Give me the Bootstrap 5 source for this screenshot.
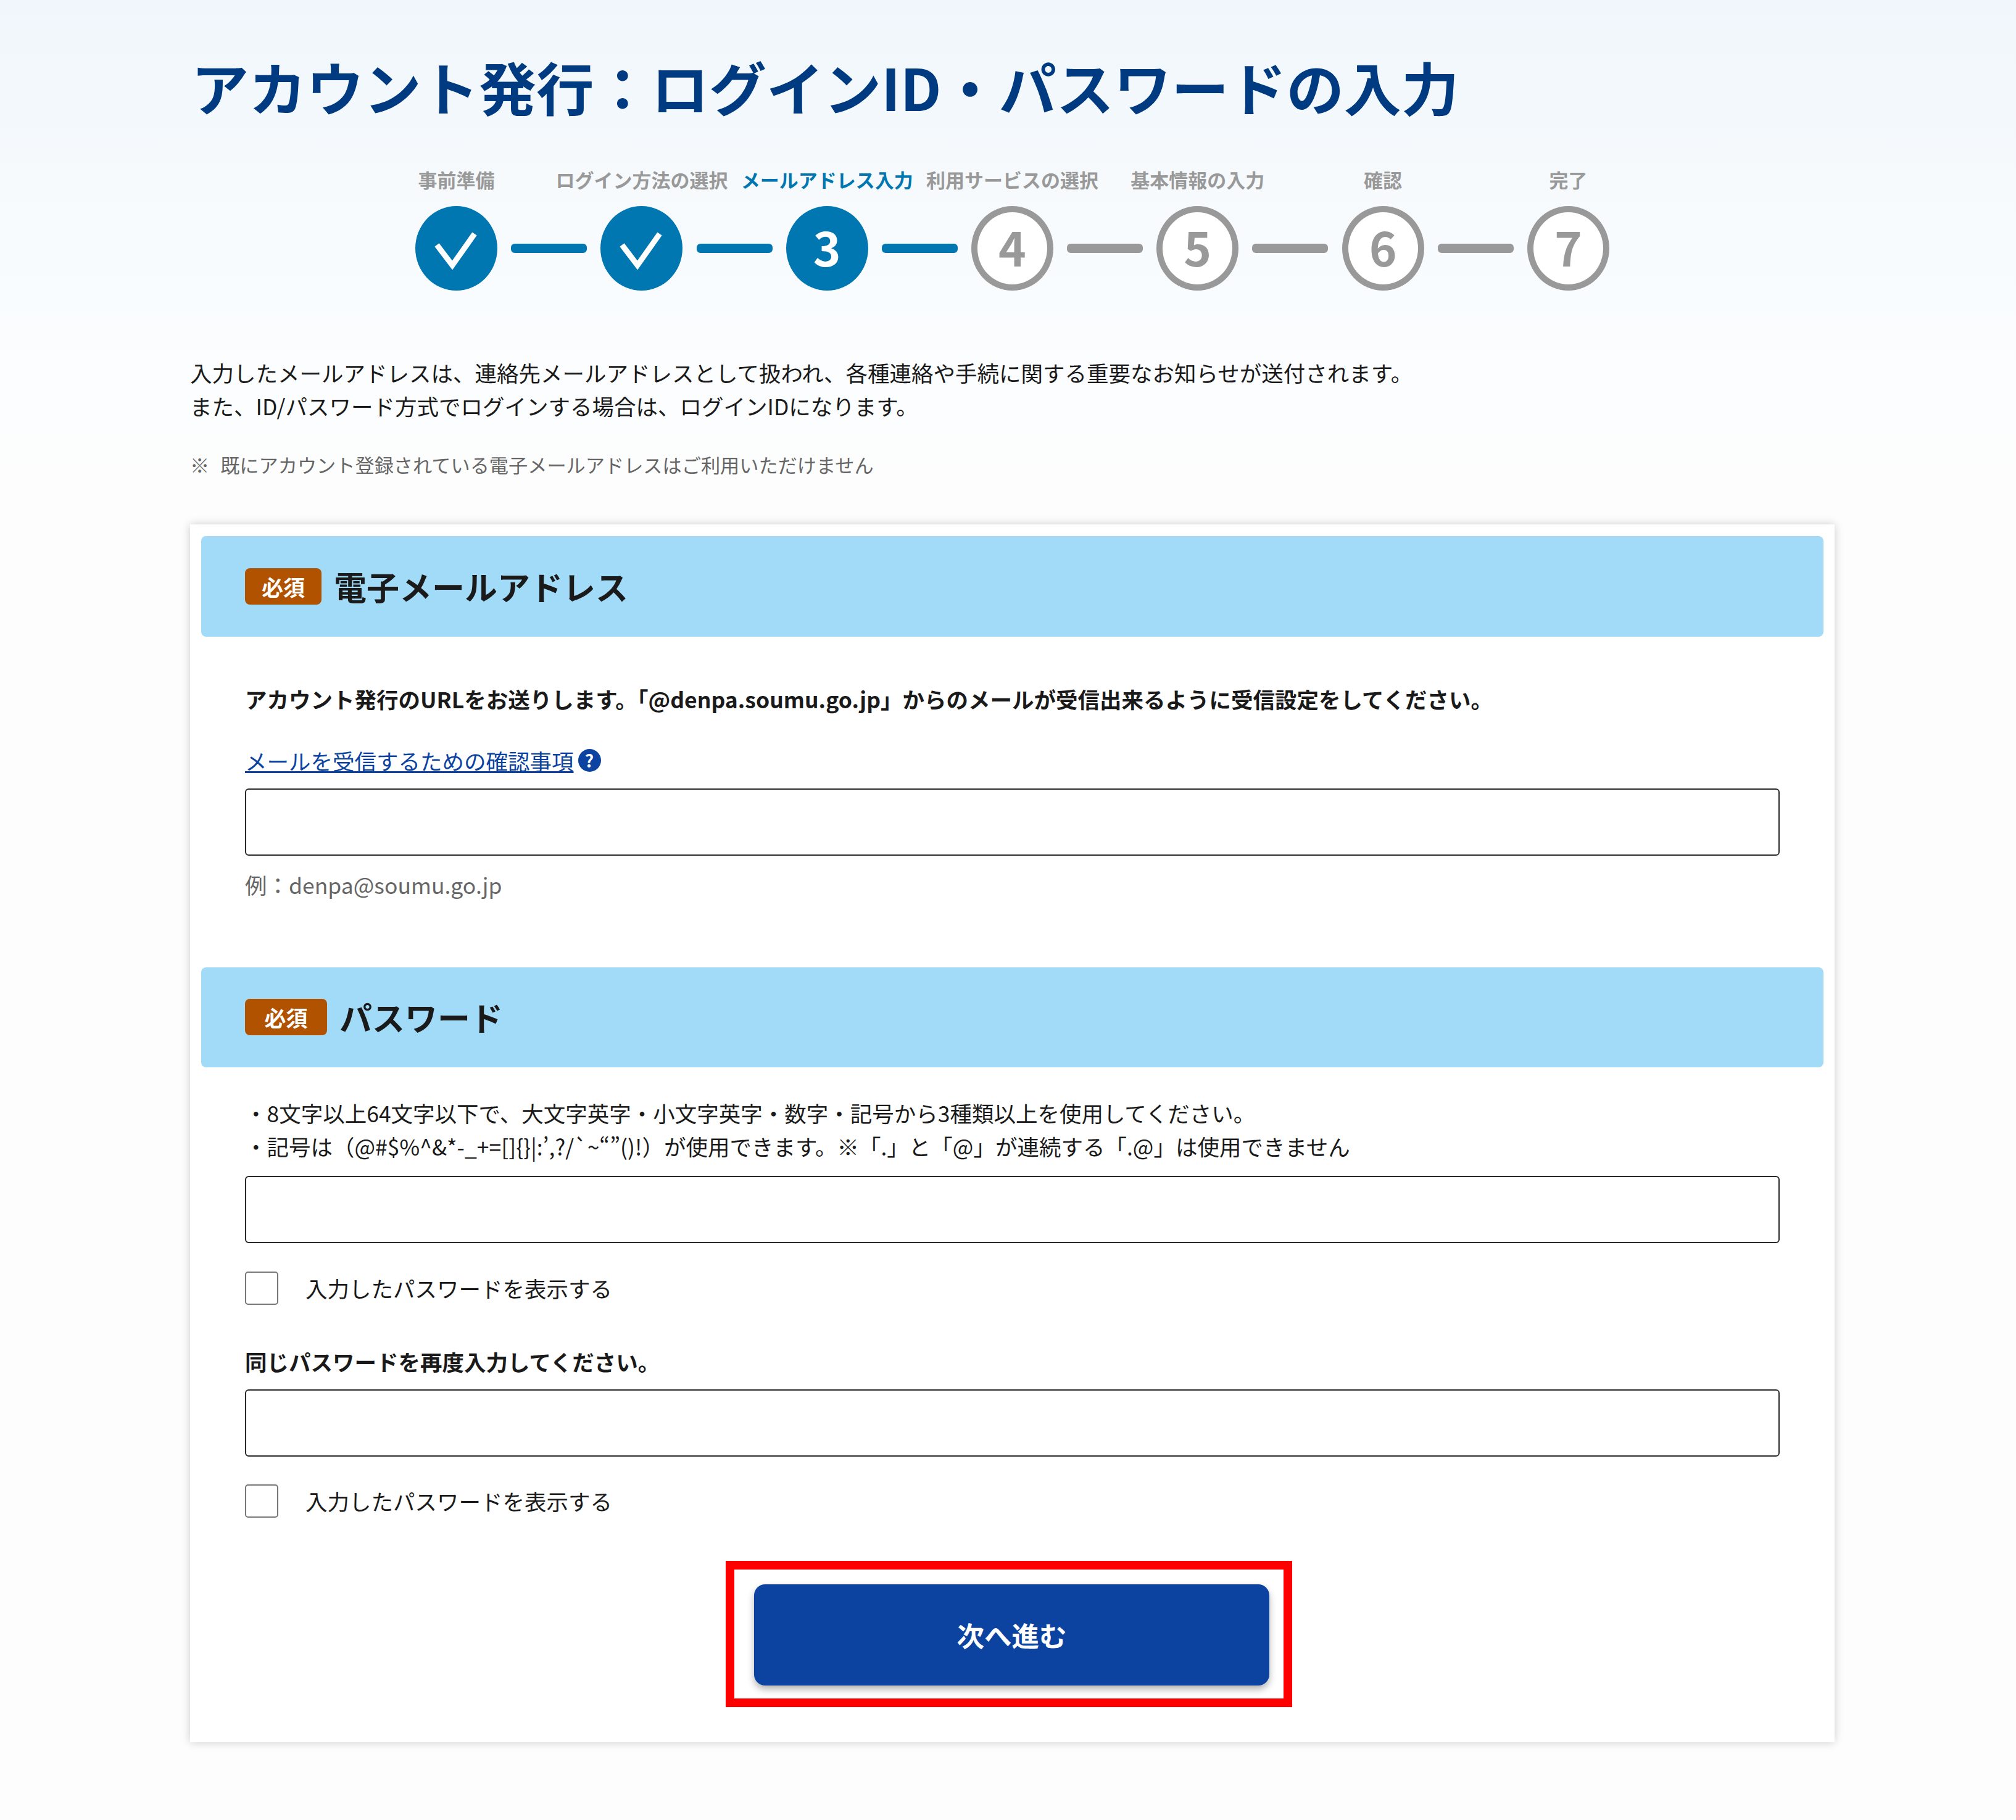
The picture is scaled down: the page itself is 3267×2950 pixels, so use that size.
<!DOCTYPE html>
<html lang="ja">
<head>
<meta charset="utf-8">
<title>アカウント発行</title>
<link href="https://cdn.jsdelivr.net/npm/bootstrap@5.3.0/dist/css/bootstrap.min.css" rel="stylesheet">
<style>
html,body{margin:0;background:#fdfdfd}
body{font-family:"Noto Sans CJK JP","Noto Sans",sans-serif;font-size:35.5px;line-height:54px;color:#1a1a1a;min-height:2950px}
.pg{background:linear-gradient(#f0f6fb 0,#f9fcfe 480px,#fdfdfd 800px);height:2950px;padding-top:74px}
.wrap{margin-left:308px;width:2665px}
.pg-title{font-size:93.2px;line-height:132px;font-weight:700;color:#003a80;margin:0 0 65px 2px}
.lbls{height:40px;margin-bottom:23px}
.lbl{width:300.3px;text-align:center;font-size:31px;line-height:40px;font-weight:700;color:#999;white-space:nowrap}
.lbl.on{color:#0077b0}
.trk{height:137px}
.dot{width:133px;height:137px;flex:none;font-size:76px;font-weight:700;line-height:1;background:#fff;color:#999;border:10px solid #999}
.dot.num{padding-bottom:7px}
.dot.on{background:#0077b0;color:#fff;border-color:#0077b0}
.dot svg{width:133px;height:137px;flex:none}
.bar{width:123px;height:15px;flex:none;margin:0 22.15px;background:#999;border-radius:6px}
.bar.on{background:#0077b0}
.intro{margin:106px 0 0}
.note{margin:46px 0 75px;font-size:31.2px;line-height:44px;color:#666;word-spacing:2px}
.panel{background:#fff;border:0;border-radius:0;box-shadow:0 0 14px rgba(0,0,0,.2);padding:19px 18px 57px;height:1974px}
.strip{height:163px;background:#a2dbf7;border-radius:8px;padding-left:71px}
.req{background:#b15200;color:#fff;font-size:35px;font-weight:700;height:59px;line-height:59px;width:124px;text-align:center;border-radius:8px;margin-right:20px}
.req.wide{width:133px}
.strip-h{font-size:53px;line-height:1;font-weight:700;margin:0;color:#1a1a1a}
.sec{padding:0 71px}
.txt-b{font-weight:700}
.hlp{width:37px;height:37px;background:#0d43a0;color:#fff;font-size:28px;line-height:37px;font-weight:700;text-align:center;margin-left:7px}
.lnk{color:#0d43a0}
.form-control.fld{height:109px;border:2.5px solid #2a2a2a;border-radius:6px;background:#fff}
.eg{color:#666}
.form-check-input.chk{width:54px;height:54px;margin:0 44px 0 0;border:2px solid #777;border-radius:5px;float:none;flex:none}
.frame{border:14px solid #f00;padding:24px 23px 21px 32px;width:918px;height:237px;margin-left:850px;margin-top:70px}
.btn.go{width:835px;height:164px;background:#0d43a0;border:0;border-radius:18px;color:#fff;font-size:44.5px;font-weight:700;box-shadow:0 6px 12px rgba(0,0,0,.3);display:block;padding:0}
.sp1{margin-top:74px}.sp2{margin-top:46px}.sp3{margin-top:18px}.sp3b{margin-top:21px}.sp4{margin-top:20px}.sp5{margin-top:107px}.sp6{margin-top:47px}.sp7{margin-top:46px}.sp8{margin-top:65px}.sp9{margin-top:18px}.sp7b{margin-top:45px}
</style>
</head>
<body>
<div class="pg">
<div class="wrap">
  <h1 class="pg-title">アカウント発行：ログインID・パスワードの入力</h1>

  <div class="lbls d-flex justify-content-center">
    <div class="lbl">事前準備</div><div class="lbl">ログイン方法の選択</div><div class="lbl on">メールアドレス入力</div><div class="lbl">利用サービスの選択</div><div class="lbl">基本情報の入力</div><div class="lbl">確認</div><div class="lbl">完了</div>
  </div>
  <div class="trk d-flex align-items-center justify-content-center">
    <div class="dot on rounded-circle d-flex align-items-center justify-content-center"><svg viewBox="0 0 133 137"><path d="M35 63 60 96 96 45" fill="none" stroke="#fff" stroke-width="9"/></svg></div>
    <div class="bar on"></div>
    <div class="dot on rounded-circle d-flex align-items-center justify-content-center"><svg viewBox="0 0 133 137"><path d="M35 63 60 96 96 45" fill="none" stroke="#fff" stroke-width="9"/></svg></div>
    <div class="bar on"></div>
    <div class="dot num on rounded-circle d-flex align-items-center justify-content-center">3</div>
    <div class="bar on"></div>
    <div class="dot num rounded-circle d-flex align-items-center justify-content-center">4</div>
    <div class="bar"></div>
    <div class="dot num rounded-circle d-flex align-items-center justify-content-center">5</div>
    <div class="bar"></div>
    <div class="dot num rounded-circle d-flex align-items-center justify-content-center">6</div>
    <div class="bar"></div>
    <div class="dot num rounded-circle d-flex align-items-center justify-content-center">7</div>
  </div>

  <p class="intro">入力したメールアドレスは、連絡先メールアドレスとして扱われ、各種連絡や手続に関する重要なお知らせが送付されます。<br>また、ID/パスワード方式でログインする場合は、ログインIDになります。</p>
  <p class="note">※&nbsp; 既にアカウント登録されている電子メールアドレスはご利用いただけません</p>

  <form class="panel card">
    <div class="strip d-flex align-items-center"><span class="req">必須</span><h2 class="strip-h">電子メールアドレス</h2></div>
    <div class="sec">
      <div class="txt-b sp1">アカウント発行のURLをお送りします。「@denpa.soumu.go.jp」からのメールが受信出来るように受信設定をしてください。</div>
      <div class="d-flex align-items-center sp2"><a class="lnk" href="#">メールを受信するための確認事項</a><span class="hlp rounded-circle">?</span></div>
      <input class="form-control fld sp3" type="email" aria-label="電子メールアドレス">
      <div class="eg sp4">例：denpa@soumu.go.jp</div>
    </div>
    <div class="strip d-flex align-items-center sp5"><span class="req wide">必須</span><h2 class="strip-h">パスワード</h2></div>
    <div class="sec">
      <div class="sp6">・8文字以上64文字以下で、大文字英字・小文字英字・数字・記号から3種類以上を使用してください。<br>・記号は（@#$%^&amp;*-_+=[]{}|:’,?/`~“”()!）が使用できます。※「.」と「@」が連続する「.@」は使用できません</div>
      <input class="form-control fld sp3b" type="password" aria-label="パスワード">
      <label class="d-flex align-items-center sp7"><input class="form-check-input chk" type="checkbox"><span>入力したパスワードを表示する</span></label>
      <div class="txt-b sp8">同じパスワードを再度入力してください。</div>
      <input class="form-control fld sp9" type="password" aria-label="パスワード再入力">
      <label class="d-flex align-items-center sp7b"><input class="form-check-input chk" type="checkbox"><span>入力したパスワードを表示する</span></label>
    </div>
    <div class="frame"><button class="btn go" type="button">次へ進む</button></div>
  </form>
</div>
</div>
<script src="https://cdn.jsdelivr.net/npm/bootstrap@5.3.0/dist/js/bootstrap.bundle.min.js"></script>
</body>
</html>
